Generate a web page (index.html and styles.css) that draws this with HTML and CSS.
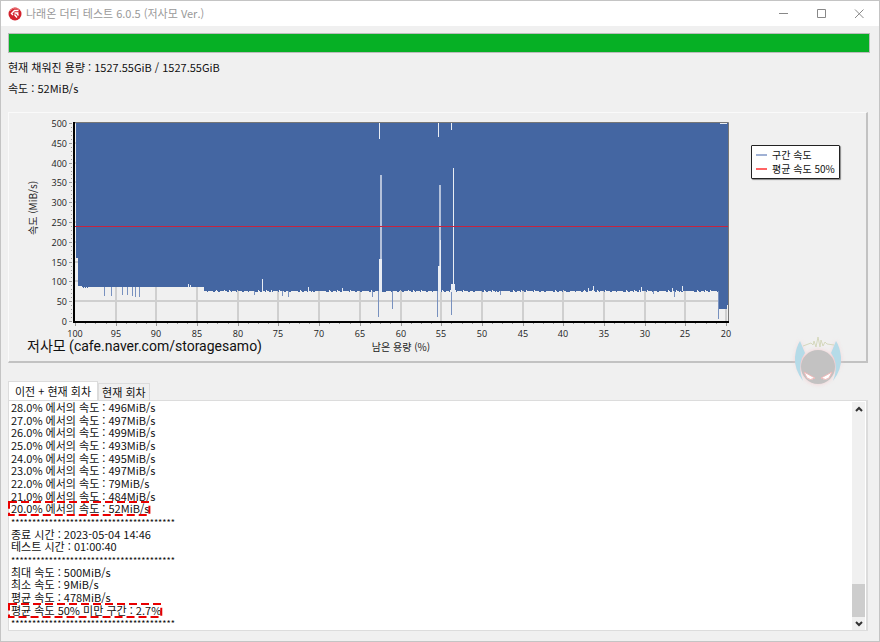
FILE: index.html
```html
<!doctype html>
<html lang="ko">
  <head>
    <meta charset="utf-8">
    <title>나래온 더티 테스트 6.0.5 (저사모 Ver.)</title>
    <link rel="stylesheet" href="styles.css">
  </head>

  <body>
    <div class="window">
      <header class="titlebar">
        <svg class="app-icon" viewBox="0 0 14 14" aria-hidden="true">
          <circle cx="7" cy="7" r="6.5" fill="#d3222c" />
          <path d="M2 4A6 6 0 0 1 11 2.5" fill="none" stroke="#ee7d80" />
          <path d="M10.5 3.5H6.5L3.5 6.5L5 8M6.5 6H10.5M6.5 7.5L9 10.5M8.5 6L10.5 8.5" fill="none" stroke="#fff" stroke-width="1.4" />
        </svg>
        <h1>나래온 더티 테스트 6.0.5 (저사모 Ver.)</h1>
        <div class="window-buttons">
          <button type="button" aria-label="최소화">
            <svg viewBox="0 0 10 10"><path d="M1 4.5H10" /></svg>
          </button>
          <button type="button" aria-label="최대화">
            <svg viewBox="0 0 10 10"><path d="M1.5 0.5H9.5V8.5H1.5Z" /></svg>
          </button>
          <button type="button" aria-label="닫기">
            <svg viewBox="0 0 10 10"><path d="M1 0.5L9.5 9M9.5 0.5L1 9" /></svg>
          </button>
        </div>
      </header>

      <main>
        <progress value="100" max="100" aria-label="진행률"></progress>
        <p class="status">현재 채워진 용량 : 1527.55GiB / 1527.55GiB</p>
        <p class="status">속도 : 52MiB/s</p>

        <section class="chart-panel">
          <svg class="chart" viewBox="9 113 730 248" role="img" aria-label="구간 속도">
            <g id="grid"></g>
            <path id="speed" />
            <g id="drops"></g>
            <g id="gaps"></g>
            <path class="average" d="M75 226.5H728" />
            <path class="frame" d="M74 122.5H728.5V321" />
            <path class="axis" d="M74 122V322H729" />
            <g id="ticks"></g>
            <g id="labels"></g>
            <text class="axis-title" transform="translate(37 208) rotate(-90)" text-anchor="middle">속도 (MiB/s)</text>
            <text class="axis-title" x="401" y="351" text-anchor="middle">남은 용량 (%)</text>
            <text class="credit" x="27" y="351">저사모 (cafe.naver.com/storagesamo)</text>
          </svg>

          <ul class="legend">
            <li class="legend-speed">구간 속도</li>
            <li class="legend-average">평균 속도 50%</li>
          </ul>

          <svg class="mascot" viewBox="0 0 56 56" aria-hidden="true">
            <g class="mascot-glow">
              <path d="M10 6L14 18L15 40L9 36L5 24Z" />
              <path d="M46 6L42 18L41 40L47 36L51 24Z" />
              <circle cx="28" cy="32" r="17" />
            </g>
            <path d="M10 6L15 18L12 23Q8 33 13 46Q4 34 5 22Q6 12 10 6Z" fill="#b5dbe8" />
            <path d="M46 6L41 18L44 23Q48 33 43 46Q52 34 51 22Q50 12 46 6Z" fill="#b5dbe8" />
            <path d="M13 11L21 8L23 10L24 6L26 12L28 2L30 12L31 5L33 11L35 7L37 9L44 10" fill="none" stroke="#d5d8bd" />
            <circle cx="28" cy="32" r="17" fill="#c3c2c2" />
            <path d="M14 37L25 43Q20 46 17 43Z M42 37L31 43Q36 46 39 43Z" fill="#fff" stroke="#efb9b9" />
          </svg>
        </section>

        <div class="tabs" role="tablist">
          <button type="button" class="tab active" role="tab" aria-selected="true">이전 + 현재 회차</button>
          <button type="button" class="tab" role="tab" aria-selected="false">현재 회차</button>
        </div>

        <section class="log">
          <div class="lines" role="log">
            <p>28.0% 에서의 속도 : 496MiB/s</p>
            <p>27.0% 에서의 속도 : 497MiB/s</p>
            <p>26.0% 에서의 속도 : 499MiB/s</p>
            <p>25.0% 에서의 속도 : 493MiB/s</p>
            <p>24.0% 에서의 속도 : 495MiB/s</p>
            <p>23.0% 에서의 속도 : 497MiB/s</p>
            <p>22.0% 에서의 속도 : 79MiB/s</p>
            <p>21.0% 에서의 속도 : 484MiB/s</p>
            <p><span class="marked">20.0% 에서의 속도 : 52MiB/s<svg><rect width="100%" height="100%" /></svg></span></p>
            <p class="stars">***************************************</p>
            <p>종료 시간 : 2023-05-04 14:46</p>
            <p>테스트 시간 : 01:00:40</p>
            <p class="stars">***************************************</p>
            <p>최대 속도 : 500MiB/s</p>
            <p>최소 속도 : 9MiB/s</p>
            <p>평균 속도 : 478MiB/s</p>
            <p><span class="marked">평균 속도 50% 미만 구간 : 2.7%<svg><rect width="100%" height="100%" /></svg></span></p>
            <p class="stars">***************************************</p>
          </div>
          <div class="scrollbar">
            <button type="button" aria-label="위로">
              <svg viewBox="0 0 8 6"><path d="M1 5L4 2L7 5" /></svg>
            </button>
            <div class="thumb"></div>
            <button type="button" aria-label="아래로">
              <svg viewBox="0 0 8 6"><path d="M1 1L4 4L7 1" /></svg>
            </button>
          </div>
        </section>
      </main>
    </div>

    <script src="script.js"></script>
  </body>
</html>
```
FILE: styles.css
```css
* {
  box-sizing: border-box;
}

body {
  margin: 0;
  background-color: #f0f0f0;
  color: #111;
  font-family: "Noto Sans CJK KR", sans-serif;
  font-size: 11px;
  line-height: 21px;
}

p,
h1,
ul {
  margin: 0;
  padding: 0;
}

button {
  margin: 0;
  padding: 0;
  border: none;
  background: none;
  color: inherit;
  font: inherit;
}

.window {
  display: flex;
  flex-direction: column;
  min-height: 100vh;
  border: 1px solid #c4c4c4;
}

/* 제목 표시줄 */
.titlebar {
  display: flex;
  align-items: center;
  height: 25px;
  padding: 0 1px 0 7px;
  background-color: #fff;
}

.app-icon {
  width: 14px;
  height: 14px;
  margin-right: 4px;
}

.titlebar h1 {
  flex: 1;
  color: #999;
  font-size: 11px;
  font-weight: normal;
}

.window-buttons {
  display: flex;
}

.window-buttons button {
  display: flex;
  align-items: center;
  justify-content: center;
  width: 38px;
  height: 25px;
}

.window-buttons svg {
  width: 10px;
  height: 10px;
  fill: none;
  stroke: #888;
}

main {
  display: flex;
  flex: 1;
  flex-direction: column;
  padding: 7px 11px 10px 7px;
}

/* 진행 막대 */
progress {
  display: block;
  width: calc(100% + 2px);
  height: 20px;
  margin-bottom: 4px;
  border: 1px solid #bcbcbc;
  background-color: #e6e6e6;
  appearance: none;
}

progress::-webkit-progress-bar {
  background-color: #e6e6e6;
}

progress::-webkit-progress-value {
  background-color: #06b025;
}

/* 차트 */
.chart-panel {
  display: flex;
  position: relative;
  align-items: flex-start;
  margin-top: 13px;
  border: 1px solid #fafafa;
  border-right: 2px solid #c2c2c2;
  border-bottom: 2px solid #c2c2c2;
}

.chart {
  display: block;
  flex: 1;
  min-width: 0;
}

.chart text {
  fill: #222;
}

.chart .label {
  font-family: "Open Sans", sans-serif;
  font-size: 9px;
}

.chart .axis-title {
  font-size: 10px;
}

.chart .credit {
  fill: #111;
  font-family: Roboto, "Noto Sans CJK KR", sans-serif;
  font-size: 14px;
}

#speed {
  fill: #4466a2;
}

#grid path {
  stroke: #cfcfcf;
  stroke-width: 2;
}

#ticks path {
  stroke: #999;
}

#drops path {
  stroke: #7891bf;
}

#gaps rect {
  fill: #e9edf4;
}

#gaps .narrow {
  fill: #b4c1da;
}

.average {
  stroke: #c62440;
}

.frame {
  fill: none;
  stroke: #777;
}

.axis {
  fill: none;
  stroke: #000;
  stroke-width: 2;
}

.legend {
  width: 89px;
  margin: 32px 26px 0 12px;
  padding: 2px 4px;
  border: 1px solid #222;
  border-radius: 1px;
  background-color: #fff;
  box-shadow: 1px 1px 1px #888;
  font-size: 10px;
  line-height: 14px;
  list-style: none;
  white-space: nowrap;
}

.legend li {
  display: flex;
  align-items: center;
  gap: 5px;
}

.legend li::before {
  width: 11px;
  height: 2px;
  content: "";
}

.legend-speed::before {
  background-color: #a0b1d4;
}

.legend-average::before {
  background-color: #ff6464;
}

/* 차트 모서리에 겹치는 마스코트 */
.mascot {
  position: absolute;
  right: 20px;
  bottom: -30px;
  width: 56px;
  height: 56px;
}

.mascot-glow {
  fill: #f5cdd0;
  filter: blur(2px);
}

/* 탭 */
.tabs {
  display: flex;
  align-items: flex-end;
  margin-top: 18px;
}

.tab {
  height: 17px;
  padding: 0 3px;
  border: 1px solid #dcdcdc;
  border-bottom: none;
  line-height: 15px;
}

.tab.active {
  height: 19px;
  padding: 0 6px;
  background-color: #fff;
}

/* 로그 */
.log {
  display: flex;
  flex: 1;
  border: 1px solid #dcdcdc;
  border-right-width: 2px;
  background-color: #fff;
}

.lines {
  display: grid;
  flex: 1;
  grid-auto-rows: 1fr;
  height: 228px;
  padding-left: 2px;
  line-height: 12px;
}

.stars {
  padding-top: 4px;
  font-size: 9px;
  line-height: 8px;
}

.marked {
  position: relative;
}

.marked svg {
  position: absolute;
  top: 2px;
  left: -2px;
  width: calc(100% + 2px);
  height: 13px;
  overflow: visible;
}

.marked rect {
  fill: none;
  stroke: #e80000;
  stroke-width: 2;
  stroke-dasharray: 8 4;
}

.scrollbar {
  display: flex;
  flex-direction: column;
  width: 13px;
  margin: 1px 1px 0 0;
  background-color: #f0f0f0;
}

.scrollbar button {
  display: flex;
  align-items: center;
  justify-content: center;
  height: 13px;
}

.scrollbar svg {
  width: 8px;
  height: 6px;
  fill: none;
  stroke: #333;
  stroke-width: 2;
}

.thumb {
  height: 33px;
  margin-top: auto;
  background-color: #cdcdcd;
}
```
FILE: script.js
```js
var NS = 'http://www.w3.org/2000/svg'

var LEFT = 75
var RIGHT = 728
var TOP = 123
var BOTTOM = 321

function add(parentId, name, attrs, text) {
  var el = document.createElementNS(NS, name)
  for (var key in attrs) {
    el.setAttribute(key, attrs[key])
  }
  if (text !== undefined) {
    el.textContent = text
  }
  document.getElementById(parentId).appendChild(el)
}

// 남은 용량(%) -> x
function posX(percent) {
  return Math.round(LEFT + (100 - percent) * 651 / 80)
}

// 속도(MiB/s) -> y
function posY(speed) {
  return Math.round(BOTTOM - speed * 198 / 500)
}

// 가로축
for (var p = 100; p >= 20; p -= 5) {
  var x = posX(p)
  if (p < 100) {
    add('grid', 'path', { d: 'M' + x + ' ' + TOP + 'V' + BOTTOM })
  }
  add('ticks', 'path', { d: 'M' + (x + 0.5) + ' 323V326' })
  add('labels', 'text', { 'class': 'label', x: x, y: 337, 'text-anchor': 'middle' }, p)
  for (var i = 1; i < 4 && p > 20; i++) {
    add('ticks', 'path', { d: 'M' + (posX(p - i * 1.25) + 0.5) + ' 323V324' })
  }
}

// 세로축
for (var s = 0; s <= 500; s += 50) {
  var y = posY(s)
  if (s > 0) {
    add('grid', 'path', { d: 'M' + LEFT + ' ' + y + 'H' + RIGHT })
  }
  add('ticks', 'path', { d: 'M69 ' + (y + 0.5) + 'H72' })
  add('labels', 'text', { 'class': 'label', x: 67, y: y + 4, 'text-anchor': 'end' }, s)
  for (var j = 1; j < 5 && s < 500; j++) {
    add('ticks', 'path', { d: 'M71 ' + (posY(s + j * 10) + 0.5) + 'H72' })
  }
}

// 구간 속도 영역. 아래쪽 경계는 조금씩 흔들린다
var noise = [0, 0, 1, 0, 0, 0, 1, 1, 0, -1, 0, 0, 1, 0, 1, 0, 0, 0, 0, 1, 0, -1, 1]
var d = 'M76 123V258H78V286H82'
for (var a = 82; a < 204; a++) {
  d += 'V' + (a < 88 && a % 2 ? 288 : 287) + 'H' + (a + 1)
}
for (var b = 204; b < 718; b++) {
  d += 'V' + (291 + noise[(b * 7 + (b >> 3)) % noise.length]) + 'H' + (b + 1)
}
d += 'V309H727V305H728V123Z'
document.getElementById('speed').setAttribute('d', d)

// 순간적으로 떨어진 구간 [x, 끝 y]
var drops = [
  [104, 296], [111, 296], [122, 295], [127, 295], [132, 296], [135, 297], [139, 297],
  [254, 295], [282, 296], [288, 297], [372, 297], [378, 317], [392, 309], [437, 317],
  [451, 315], [500, 295], [653, 294], [674, 297], [718, 319]
]
for (let drop of drops) {
  add('drops', 'path', { d: 'M' + (drop[0] + 0.5) + (drop[0] < 204 ? ' 287V' : ' 291V') + drop[1] })
}

// 비어 있는 구간 [x, y, 너비, 높이]
var gaps = [
  [379, 123, 1, 16], [438, 123, 1, 14], [451, 123, 1, 7], [720, 123, 7, 1],
  [380, 175, 2, 85], [379, 259, 3, 33], [439, 185, 2, 82], [438, 266, 3, 26],
  [440, 240, 1, 52], [453, 168, 1, 117], [451, 284, 4, 8],
  [188, 284, 1, 3], [190, 285, 1, 2], [262, 279, 1, 12], [308, 287, 1, 4],
  [342, 288, 1, 3], [588, 288, 1, 3], [593, 286, 1, 5], [641, 287, 1, 4],
  [672, 288, 1, 3], [682, 286, 1, 5]
]
for (let gap of gaps) {
  add('gaps', 'rect', {
    'class': gap[2] == 2 ? 'narrow' : '',
    x: gap[0], y: gap[1], width: gap[2], height: gap[3]
  })
}
```
